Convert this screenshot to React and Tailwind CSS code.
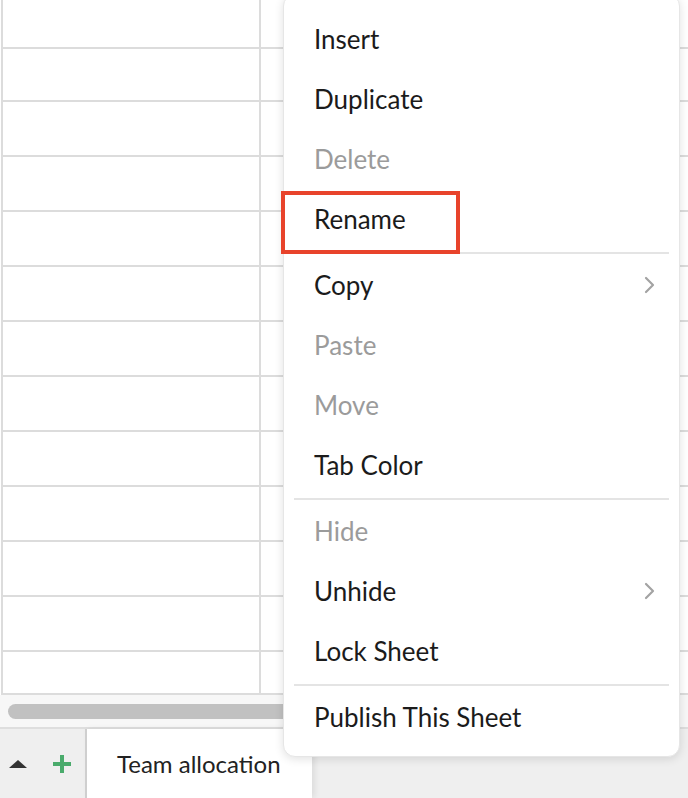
import React from "react";

const font = { fontFamily: "Lato, 'Noto Sans', sans-serif" };

// border-box heights, each row carries its own 2px bottom line
const rowHeights = [49, 53, 55, 55, 55, 55, 55, 55, 55, 55, 55, 55, 41];

const menuItems = [
  { label: "Insert" },
  { label: "Duplicate" },
  { label: "Delete", disabled: true },
  { label: "Rename", marked: true },
  { sep: true },
  { label: "Copy", sub: true },
  { label: "Paste", disabled: true },
  { label: "Move", disabled: true },
  { label: "Tab Color" },
  { sep: true },
  { label: "Hide", disabled: true },
  { label: "Unhide", sub: true },
  { label: "Lock Sheet" },
  { sep: true },
  { label: "Publish This Sheet" },
];

const Chevron = () => (
  <svg width="12" height="20" viewBox="0 0 12 20" fill="none">
    <path d="M2 3l7 7-7 7" stroke="#a3a3a3" strokeWidth="2.2" strokeLinecap="round" strokeLinejoin="round" />
  </svg>
);

const SheetMenu = () => (
  <div className="absolute left-[283px] top-[-6px] w-[397px] bg-white rounded-[12px] border border-[#e6e6e6] shadow-[0_2px_10px_rgba(0,0,0,0.12)] pt-[15px] pb-[8px]">
    {menuItems.map((item, i) =>
      item.sep ? (
        <div key={i} className="h-[2px] bg-[#e4e4e4] mx-[10px] mt-[2px] mb-[2px]" />
      ) : (
        <div
          key={i}
          className={
            "relative h-[60px] flex items-center justify-between pl-[30px] pr-[23px] text-[26px] leading-none pb-[3px] " +
            (item.disabled ? "text-[#9b9b9b]" : "text-[#1b1b1b]")
          }
        >
          <span>{item.label}</span>
          {item.sub && <Chevron />}
          {item.marked && (
            <div className="absolute left-[-3px] top-[1px] w-[179px] h-[63px] border-[4px] border-[#e8432b]" />
          )}
        </div>
      )
    )}
  </div>
);

export default function App() {
  return (
    <div className="relative w-[688px] h-[798px] overflow-hidden bg-white" style={font}>
      <div className="flex flex-col h-full">
        <div className="pl-[1px]">
          <div className="border-l-2 border-b-2 border-[#dcdcdc]">
            {rowHeights.map((h, i) => (
              <div
                key={i}
                className={"flex " + (i < rowHeights.length - 1 ? "border-b-2 border-[#dcdcdc]" : "")}
                style={{ height: h }}
              >
                <div className="w-[258px] border-r-2 border-[#dcdcdc]" />
                <div className="flex-1" />
              </div>
            ))}
          </div>
        </div>
        <div className="h-[34px] bg-[#f7f7f7] flex items-center px-[8px] border-b-2 border-[#dedede]">
          <div className="h-[15px] w-[400px] rounded-full bg-[#c1c1c1]" />
        </div>
        <div className="flex-1 bg-[#efefef] flex">
          <div className="w-[85px] flex items-center">
            <div className="ml-[9px] w-0 h-0 border-l-[9px] border-r-[9px] border-b-[8px] border-l-transparent border-r-transparent border-b-[#333333]" />
            <svg className="ml-[25px]" width="20" height="20" viewBox="0 0 20 20">
              <path d="M10 1v18M1 10h18" stroke="#4aab6c" strokeWidth="4" />
            </svg>
          </div>
          <div className="w-[227px] bg-white border-l-2 border-[#cfcfcf] shadow-[3px_0_6px_rgba(0,0,0,0.08)] flex items-center pl-[30px] text-[24px] text-[#222222]">
            Team allocation
          </div>
        </div>
      </div>
      <SheetMenu />
    </div>
  );
}
